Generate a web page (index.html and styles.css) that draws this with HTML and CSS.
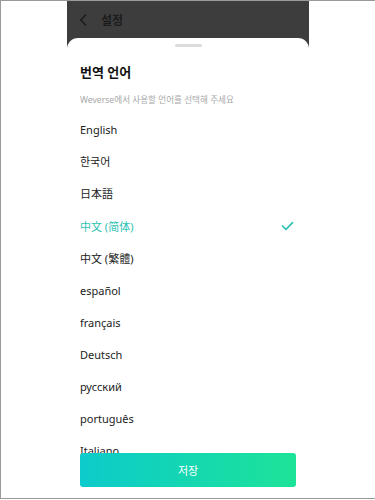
FILE: index.html
```html
<!DOCTYPE html>
<html lang="ko">

<head>
    <meta charset="UTF-8">
    <title>설정 - 번역 언어</title>
    <link rel="stylesheet" href="styles.css">
</head>

<body>
    <div class="frame">
        <div class="phone">
            <div class="topbar">
                <svg class="back" width="8" height="12" viewBox="0 0 8 12">
                    <path d="M6.5 1 L1.8 6 L6.5 11" fill="none" stroke="#1c1c1c" stroke-width="1.6" stroke-linecap="round" stroke-linejoin="round"/>
                </svg>
                <span class="topbar-title">설정</span>
            </div>

            <div class="sheet">
                <div class="handle"></div>
                <h2 class="sheet-title">번역 언어</h2>
                <p class="sheet-desc">Weverse에서 사용할 언어를 선택해 주세요</p>

                <ul class="langs">
                    <li class="lang">English</li>
                    <li class="lang">한국어</li>
                    <li class="lang">日本語</li>
                    <li class="lang selected">中文 (简体)
                        <svg class="check" width="13" height="10" viewBox="0 0 13 10">
                            <path d="M1.5 5 L5 8.3 L11.5 1.7" fill="none" stroke="#2ec2b4" stroke-width="1.7" stroke-linecap="round" stroke-linejoin="round"/>
                        </svg>
                    </li>
                    <li class="lang">中文 (繁體)</li>
                    <li class="lang">español</li>
                    <li class="lang">français</li>
                    <li class="lang">Deutsch</li>
                    <li class="lang">русский</li>
                    <li class="lang">português</li>
                    <li class="lang">Italiano</li>
                </ul>

                <button class="save">저장</button>
            </div>
        </div>
    </div>
</body>

</html>
```

FILE: styles.css
```css
html, body {
    margin: 0;
    padding: 0;
    background: #fff;
}
.frame {
    height: 499px;
    box-sizing: border-box;
    border-top: 1px solid #9a9a9a;
    border-left: 1px solid #9a9a9a;
    border-bottom: 1px solid #9a9a9a;
    overflow: hidden;
}
.phone {
    width: 242px;
    height: 100%;
    margin: 0 0 0 66px;
    background: #3d3d3d;
    display: flex;
    flex-direction: column;
    font-family: "Noto Sans", "Noto Sans CJK KR", sans-serif;
}
.topbar {
    height: 37px;
    display: flex;
    align-items: center;
    padding-left: 12px;
    flex-shrink: 0;
}
.back {
    margin-top: 1px;
}
.topbar-title {
    margin-left: 14px;
    font-size: 12px;
    font-weight: bold;
    color: #1c1c1c;
}
.sheet {
    flex: 1;
    position: relative;
    background: #fff;
    border-radius: 11px 11px 0 0;
    padding: 0 13px;
    overflow: hidden;
}
.handle {
    width: 27px;
    height: 3px;
    border-radius: 2px;
    background: #dcdcdc;
    margin: 6px auto 0;
}
.sheet-title {
    margin: 15px 0 0;
    font-size: 13px;
    line-height: 20px;
    font-weight: bold;
    color: #111;
}
.sheet-desc {
    margin: 11px 0 0;
    font-size: 8.6px;
    line-height: 14px;
    color: #a8a8a8;
}
.langs {
    list-style: none;
    margin: 6px 0 0;
    padding: 0;
}
.lang {
    height: 32.2px;
    display: flex;
    align-items: center;
    justify-content: space-between;
    font-size: 11px;
    color: #222;
}
.lang.selected {
    color: #2ec2b4;
}
.check {
    margin-right: 2px;
}
.save {
    position: absolute;
    left: 13px;
    right: 13px;
    bottom: 11px;
    height: 34px;
    border: none;
    border-radius: 3px;
    background: linear-gradient(90deg, #0ccbcb 0%, #1de398 100%);
    color: #fff;
    font-family: "Noto Sans", "Noto Sans CJK KR", sans-serif;
    font-size: 11px;
}
```
